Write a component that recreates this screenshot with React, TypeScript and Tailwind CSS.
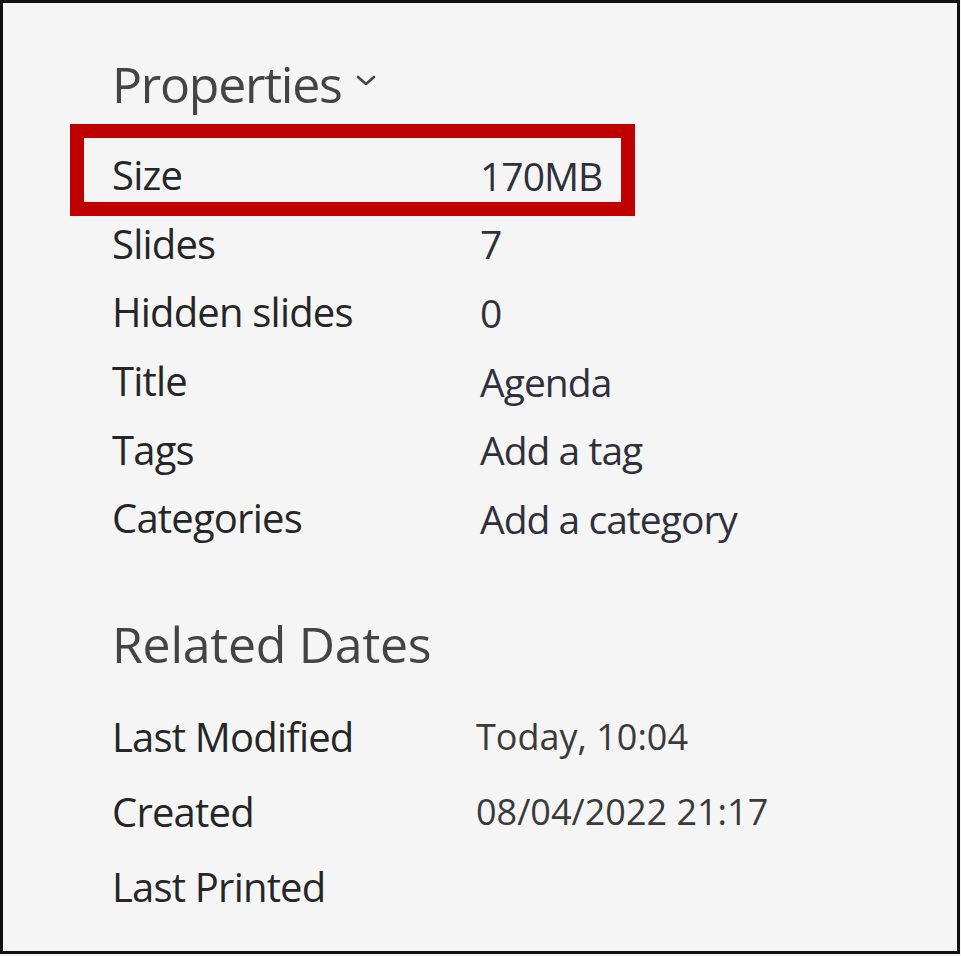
const PROPS = [
  { label: 'Size', value: '170MB', boxed: true },
  { label: 'Slides', value: '7' },
  { label: 'Hidden slides', value: '0' },
  { label: 'Title', value: 'Agenda' },
  { label: 'Tags', value: 'Add a tag' },
  { label: 'Categories', value: 'Add a category' },
]

const DATES = [
  { label: 'Last Modified', value: 'Today, 10:04' },
  { label: 'Created', value: '08/04/2022 21:17' },
  { label: 'Last Printed', value: '' },
]

export default function App() {
  return (
    <main className="min-h-screen bg-[#f5f5f5] font-['Open_Sans',_'Noto_Sans',_sans-serif]">
      <div className="w-[960px] h-[954px] border-[3px] border-[#111] bg-[#f5f5f5] pl-[109px]">
        {/* Properties */}
        <div className="mt-[51px] h-[60px] flex items-center">
          <h2 className="text-[50px] leading-none tracking-[-0.025em] text-[#444]">Properties</h2>
          <svg width="20" height="11" viewBox="0 0 20 11" className="ml-[14px] -mt-[8px] text-[#444]">
            <polyline points="2,2 10,9 18,2" fill="none" stroke="currentColor" strokeWidth="2.6" strokeLinecap="round" strokeLinejoin="round" />
          </svg>
        </div>

        <div className="mt-[27px]">
          {PROPS.map((p) => (
            <div key={p.label} className="relative h-[68.6px] flex items-center leading-none">
              {p.boxed && (
                <div className="absolute left-[-42px] top-[-17px] w-[565px] h-[92px] border-[14px] border-[#c00000]" />
              )}
              <span className="w-[368px] text-[40px] tracking-[-0.02em] text-[#262626]">{p.label}</span>
              <span className="text-[39px] tracking-[-0.025em] text-[#30303c]">{p.value}</span>
            </div>
          ))}
        </div>

        {/* Related Dates */}
        <div className="mt-[61px] h-[60px] flex items-center">
          <h2 className="text-[50px] leading-none tracking-[-0.005em] text-[#444]">Related Dates</h2>
        </div>

        <div className="mt-[26px]">
          {DATES.map((d) => (
            <div key={d.label} className="h-[75px] flex items-center">
              <span className="w-[364px] text-[40px] leading-none tracking-[-0.02em] text-[#262626]">{d.label}</span>
              <span className="text-[36px] leading-none text-[#3a3a3a]">{d.value}</span>
            </div>
          ))}
        </div>
      </div>
    </main>
  )
}
